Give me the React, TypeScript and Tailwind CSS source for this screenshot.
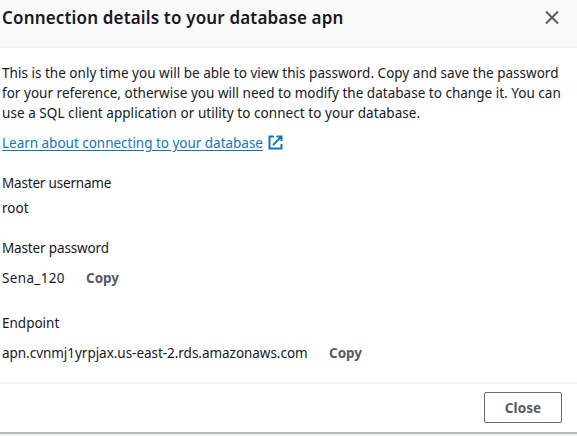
import type { ReactNode } from "react";

function Line({ className = "", children }: { className?: string; children: ReactNode }) {
  return (
    <div className="h-5">
      <span className={`whitespace-nowrap ${className}`}>{children}</span>
    </div>
  );
}

export default function App() {
  return (
    <div className="flex h-[436px] w-[577px] flex-col overflow-hidden bg-[#f2f3f3] font-['Noto_Sans',sans-serif] text-[13.5px] leading-5 text-[#16191f]">
      <section className="flex h-[434px] flex-col border-b-2 border-[#b4bbbb] bg-white">
        <header className="flex h-12 shrink-0 items-start justify-between border-b-2 border-[#f2f3f3] bg-[#fafafa] pt-[7px] pr-[18px] pl-0.5">
          <h2 className="text-[17px] leading-[22px] font-semibold tracking-[0.16px] whitespace-nowrap">Connection details to your database apn</h2>
          <button aria-label="Dismiss" className="mt-1 text-[#545b64]">
            <svg width="14" height="14" viewBox="0 0 14 14" fill="none" stroke="currentColor" strokeWidth="2">
              <path d="M1 0.5l12 12M13 0.5L1 12.5" />
            </svg>
          </button>
        </header>
        <main className="h-[334px] pt-[15px] pl-0.5">
          <Line className="tracking-[0.02px]">This is the only time you will be able to view this password. Copy and save the password</Line>
          <Line className="tracking-[0.02px]">for your reference, otherwise you will need to modify the database to change it. You can</Line>
          <Line className="tracking-[0.055px]">use a SQL client application or utility to connect to your database.</Line>
          <a className="mt-2.5 flex h-5 items-center gap-[5px] text-[#1277b6]">
            <span className="tracking-[-0.02px] whitespace-nowrap underline underline-offset-2">Learn about connecting to your database</span>
            <svg className="-mt-0.5" width="15" height="15" viewBox="0 0 15 15" fill="none" stroke="currentColor" strokeWidth="2">
              <path d="M6 1.5H1.5v12h12V9M8.5 1.5h5V6M13.5 1.5L5 10" />
            </svg>
          </a>
          <div className="mt-5"><Line className="tracking-[-0.19px]">Master username</Line></div>
          <div className="mt-[5px]"><Line>root</Line></div>
          <div className="mt-5"><Line className="tracking-[-0.15px]">Master password</Line></div>
          <div className="mt-2.5 flex">
            <div className="w-[84px]"><Line className="tracking-[0.35px]">Sena_120</Line></div>
            <button className="font-bold text-[#545b64]">Copy</button>
          </div>
          <div className="mt-[25px]"><Line>Endpoint</Line></div>
          <div className="mt-2.5 flex">
            <div className="w-[327px]"><Line className="tracking-[-0.035px]">apn.cvnmj1yrpjax.us-east-2.rds.amazonaws.com</Line></div>
            <button className="font-bold text-[#545b64]">Copy</button>
          </div>
        </main>
        <footer className="flex flex-1 justify-end border-t-2 border-[#f2f3f3] pt-2 pr-[15px]">
          <button className="flex h-[31px] w-[78px] items-center justify-center rounded-[2px] border border-[#666b70] font-bold tracking-[0.1px] text-[#545b64]">Close</button>
        </footer>
      </section>
    </div>
  );
}
